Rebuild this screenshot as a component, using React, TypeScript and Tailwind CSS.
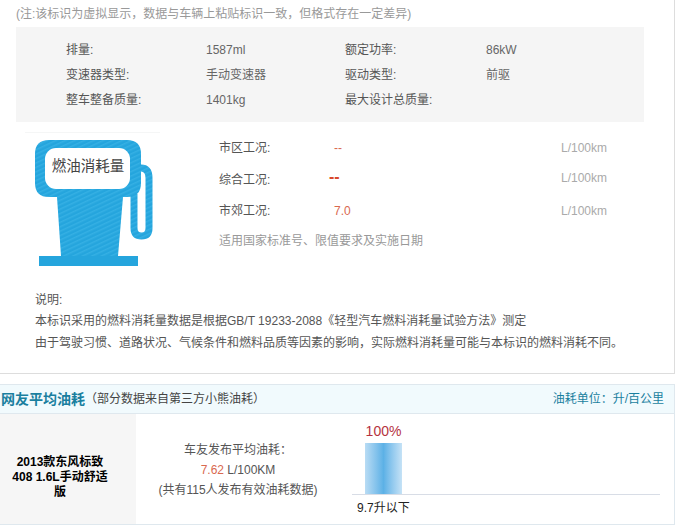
const font = "font-['Liberation_Sans','Noto_Sans_CJK_SC',sans-serif]";

function FuelPump() {
  return (
    <svg width="135" height="136" viewBox="0 0 135 136" className="block">
      <defs>
        <pattern id="hatch" width="4" height="4" patternUnits="userSpaceOnUse" patternTransform="rotate(-25)">
          <rect width="4" height="4" fill="#25a5dd" />
          <rect width="4" height="1.5" fill="#35b0e4" />
        </pattern>
      </defs>
      <path d="M0 0.5H135" stroke="#f5f6f6" />
      <path d="M116 36Q124 36 124 46V96Q124 104 116.5 104Q109 104 109 96V62" fill="none" stroke="url(#hatch)" strokeWidth="7" />
      <path d="M24 8H102Q116 8 116 22V51Q116 65 102 65H98L93 124H36L32 65H24Q10 65 10 51V22Q10 8 24 8Z" fill="url(#hatch)" />
      <path d="M14 124H113V134H14Z" fill="#25a5dd" />
      <rect x="20" y="16" width="85" height="41" rx="11" fill="#fff" />
      <text x="63" y="38.5" textAnchor="middle" fontSize="14.5" fill="#444" fontFamily="'Liberation Sans','Noto Sans CJK SC',sans-serif">燃油消耗量</text>
    </svg>
  );
}

function SpecRow({ a, b, c, d }: { a: string; b: string; c: string; d: string }) {
  return (
    <div className="flex h-[25px] items-center text-[#555]">
      <span className="w-[140px]">{a}</span>
      <span className="w-[139px] text-[#666]">{b}</span>
      <span className="w-[141px]">{c}</span>
      <span className="text-[#666]">{d}</span>
    </div>
  );
}

function FuelRow({ label, value, bold, h }: { label: string; value: string; bold?: boolean; h: string }) {
  return (
    <div className={`flex items-center ${h}`}>
      <span className="w-[115px] text-[#555]">{label}</span>
      <span className={`w-[227px] ${bold ? "-mt-[6px] -ml-[5px] text-[16px] leading-none font-bold text-[#d9492b]" : "text-[#d9694f]"}`}>{value}</span>
      <span className={`text-[#aaa] ${bold ? "-mt-[5px] ml-[5px]" : ""}`}>L/100km</span>
    </div>
  );
}

export default function App() {
  return (
    <div className={`${font} relative h-[526px] w-[681px] overflow-hidden bg-white text-[12px]`}>
      <div className="h-[374px] w-[675px] border-r border-b border-[#dddddd]">
        <div className="flex h-[27px] items-center pl-[16px] text-[#999]">(注:该标识为虚拟显示，数据与车辆上粘贴标识一致，但格式存在一定差异)</div>
        <div className="ml-4 h-[95px] w-[628px] bg-[#f5f5f5] pt-[10px] pl-[50px]">
          <SpecRow a="排量:" b="1587ml" c="额定功率:" d="86kW" />
          <SpecRow a="变速器类型:" b="手动变速器" c="驱动类型:" d="前驱" />
          <SpecRow a="整车整备质量:" b="1401kg" c="最大设计总质量:" d="" />
        </div>
        <div className="mt-[10px] flex">
          <div className="ml-[25px] w-[194px] shrink-0">
            <FuelPump />
          </div>
          <div>
            <FuelRow label="市区工况:" value="--" h="h-[31px]" />
            <FuelRow label="综合工况:" value="--" bold h="h-[34px]" />
            <FuelRow label="市郊工况:" value="7.0" h="h-[28px]" />
            <div className="mt-[7px] text-[#999]">适用国家标准号、限值要求及实施日期</div>
          </div>
        </div>
        <div className="mt-[22px] pl-[35px] text-[#555]">
          <div className="h-[20px] leading-[20px]">说明:</div>
          <div className="h-[22px] leading-[22px]">本标识采用的燃料消耗量数据是根据GB/T 19233-2088《轻型汽车燃料消耗量试验方法》测定</div>
          <div className="h-[22px] leading-[22px]">由于驾驶习惯、道路状况、气候条件和燃料品质等因素的影响，实际燃料消耗量可能与本标识的燃料消耗不同。</div>
        </div>
      </div>

      <div className="mt-[10px] h-[141px] w-[675px] border-y border-r border-[#dfe8ee]">
        <div className="flex h-[29px] items-center justify-between border-b border-[#dfe8ee] bg-[#f1fafd] pr-[10px]">
          <div className="flex items-center whitespace-nowrap pl-[1px]">
            <span className="text-[14px] font-bold text-[#1a7f9f]">网友平均油耗</span>
            <span className="text-[#444]">（部分数据来自第三方小熊油耗）</span>
          </div>
          <span className="text-[#1a7f9f]">油耗单位：升/百公里</span>
        </div>
        <div className="flex h-[110px]">
          <div className="flex w-[136px] shrink-0 items-center justify-center bg-[#f6f6f6] pt-[17px] pr-[26px] pl-[10px] text-center leading-[15px] font-bold text-black">
            2013款东风标致 408 1.6L手动舒适版
          </div>
          <div className="flex w-[216px] shrink-0 flex-col items-center pt-[26px] text-[#555]">
            <div className="-ml-[12px] h-[20px] leading-[20px]">车友发布平均油耗：</div>
            <div className="-ml-[12px] h-[20px] leading-[20px]">
              <span className="text-[#d9694f]">7.62</span> L/100KM
            </div>
            <div className="-ml-[12px] h-[20px] leading-[20px]">(共有115人发布有效油耗数据)</div>
          </div>
          <div className="w-[308px]">
            <div className="ml-[13px] flex h-[29px] w-[37px] items-center justify-center pt-[6px] text-[14px] whitespace-nowrap text-[#b5333f]">100%</div>
            <div className="flex h-[52px] items-end border-b border-[#d8dde6]">
              <div className="ml-[13px] h-[51px] w-[37px] bg-gradient-to-r from-[#b9dcf4] via-[#5cb1e6] to-[#c5e2f6]" />
            </div>
            <div className="mt-[4px] ml-[5px] text-[#222]">9.7升以下</div>
          </div>
        </div>
      </div>
    </div>
  );
}
